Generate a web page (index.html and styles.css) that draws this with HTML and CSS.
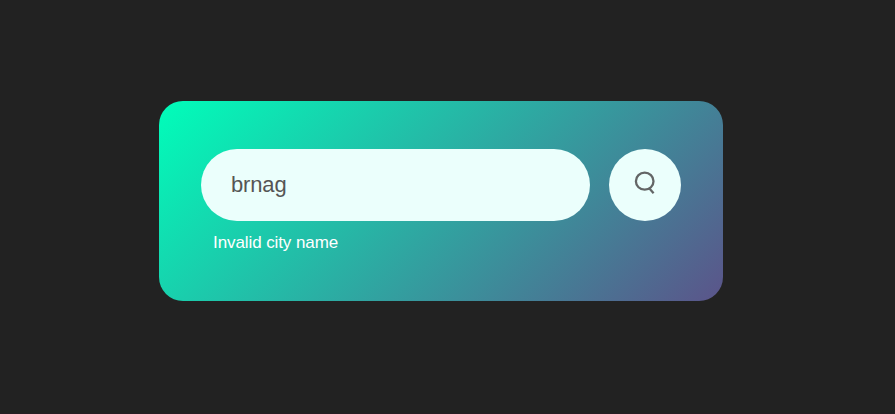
FILE: index.html
```html
<!DOCTYPE html>
<html lang="en">
<head>
<meta charset="utf-8">
<title>Weather</title>
<link rel="stylesheet" href="styles.css">
</head>
<body>
<main class="card">
  <div class="search">
    <input class="city" type="text" value="brnag" spellcheck="false" aria-label="City">
    <button class="submit" aria-label="Search">
      <svg class="icon" viewBox="0 0 24 26" width="24" height="26"><ellipse cx="11.7" cy="11.2" rx="8.8" ry="8.5" /><path d="M16 18 L20.6 23.2" /></svg>
    </button>
  </div>
  <p class="error">Invalid city name</p>
</main>
</body>
</html>
```
FILE: styles.css
```css
* {
  box-sizing: border-box;
  margin: 0;
  padding: 0;
  font-family: "Liberation Sans", Arial, sans-serif;
}

body {
  display: flex;
  align-items: flex-start;
  height: 100vh;
  border-bottom: 1px solid #271e24;
  background: #222;
}

.card {
  width: 564px;
  height: 200px;
  margin: 101px 0 0 159px;
  padding: 48px 42px;
  border-radius: 24px;
  background: linear-gradient(135deg, #00feba, #5b548a);
  color: #fff;
}

.search {
  display: flex;
  justify-content: space-between;
}

.city {
  width: 389px;
  height: 72px;
  padding: 0 30px;
  border: 0;
  outline: 0;
  border-radius: 36px;
  background: #ebfffc;
  color: #555;
  font-size: 22px;
  letter-spacing: -0.15px;
}

.submit {
  display: flex;
  justify-content: center;
  width: 72px;
  height: 72px;
  padding-top: 21px;
  border: 0;
  border-radius: 50%;
  background: #ebfffc;
}

.icon {
  fill: none;
  stroke: #636666;
  stroke-width: 2.3;
}

.error {
  margin: 12px 0 0 12px;
  font-size: 17px;
  line-height: 19px;
  letter-spacing: -0.09px;
}
```
